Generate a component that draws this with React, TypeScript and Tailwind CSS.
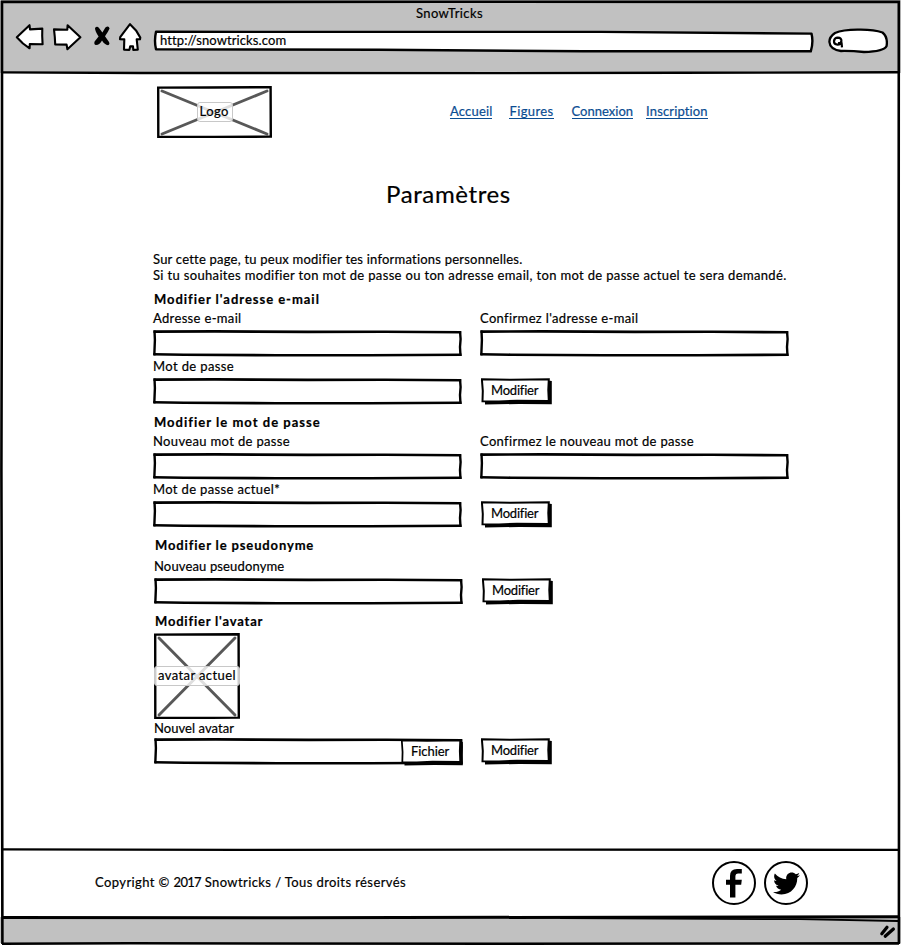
import type { ReactNode } from 'react';
import { FaTwitter } from 'react-icons/fa';

/* Hand-drawn outline of a text field, stretched to its box. */
function FieldOutline({ width }: { width: number }) {
  return (
    <svg className="pointer-events-none absolute inset-0" width={width} height="27" viewBox={`0 0 ${width} 27`} fill="none" stroke="#000" aria-hidden="true">
      <path d={`M0.5 1.6 L${width * 0.2} 1.4 L${width * 0.5} 1.9 L${width * 0.75} 1.7 L${width - 0.8} 2.3`} strokeWidth="2.6" />
      <path d={`M0.4 24.3 L${width * 0.1} 24.7 L${width * 0.4} 25.3 L${width * 0.7} 25.2 L${width - 0.5} 24.8`} strokeWidth="2.6" />
      <path d="M1.5 0.5 L1.9 10 L1.3 25.4" strokeWidth="2.4" />
      <path d={`M${width - 2} 1 L${width - 1.4} 9 L${width - 2} 17 L${width - 1.5} 26`} strokeWidth="2.4" />
    </svg>
  );
}

function Field({ label }: { label: string }) {
  return (
    <div className="relative h-[27px] w-[309px]">
      <input aria-label={label} className="size-full bg-transparent px-2 outline-none" />
      <FieldOutline width={309} />
    </div>
  );
}

function SketchButton({ children, className = 'w-[71px]', text }: { children: ReactNode; className?: string; text: string }) {
  return (
    <button className={`relative isolate flex h-[27px] items-start ${className}`}>
      <svg className="absolute inset-0 -z-10 size-full" viewBox="0 0 71 27" preserveAspectRatio="none" aria-hidden="true">
        <path d="M4 5 L69 2.8 L70.8 3 L70.8 26.2 L38 26 L4 26.4 Z" />
        <path d="M0.9 1.3 L30 1.7 L67.8 1.2 L67.3 12 L67.8 23 L36 22.8 L18 23.4 L1.5 23.3 L1.8 13 Z" fill="#fff" stroke="#000" strokeWidth="2" />
      </svg>
      <span className={`block leading-4 ${text}`}>{children}</span>
    </button>
  );
}

const modifierText = 'pl-[10px] pt-[4px] tracking-[-0.2px]';

function CrossedBox({ width, height, children }: { width: number; height: number; children: ReactNode }) {
  return (
    <div className="relative isolate flex size-full items-center justify-center">
      <svg className="absolute inset-0 -z-10" width={width} height={height} viewBox={`0 0 ${width} ${height}`} fill="none" aria-hidden="true">
        <path d={`M5 5 L${width - 5} ${height - 4} M${width - 5} 5 L5 ${height - 4}`} stroke="#585858" strokeWidth="2.9" strokeLinecap="round" />
        <path d={`M1.2 1.6 L${width * 0.45} 1.5 L${width - 1.4} 1.2 L${width - 1.2} ${height - 1.4} L${width / 2} ${height - 1.1} L1.3 ${height - 1} Z`} stroke="#000" strokeWidth="2.4" />
      </svg>
      {children}
    </div>
  );
}

function Icon({ d, label }: { d: string; label: string }) {
  return (
    <svg width="30" height="30" viewBox="0 0 30 30" fill="#fff" stroke="#000" strokeWidth="2.1" strokeLinejoin="round" strokeLinecap="round" role="img" aria-label={label}>
      <path d={d} />
    </svg>
  );
}

function BrowserBar() {
  return (
    <header className="h-[73px] bg-[#c1c1c1]">
      <div className="flex h-7 items-start justify-center pt-[5px] pr-[2px]">
        <span className="leading-4 tracking-[0.39px]">SnowTricks</span>
      </div>
      <div className="flex h-[36px] items-start pl-[15px]">
        <div className="-mt-[6px] flex">
          <div className="w-[37px]"><Icon label="Précédent" d="M1.8 15.2 L14.5 3.2 L15 7.4 L27.3 6.6 L27.2 14 L27.6 22.2 L14.8 22 L14.6 26.3 L8 21.5 Z" /></div>
          <div className="w-[40px]"><Icon label="Suivant" d="M2 7.4 L15.3 7.8 L15.6 3.2 L28.4 15.2 L15.4 27.2 L14.6 22.6 L3.2 22.4 L2.8 15 Z" /></div>
          <div className="w-[26px]">
            <svg width="26" height="30" viewBox="0 0 26 30" role="img" aria-label="Arrêter">
              <path d="M3 6 Q5 3.6 7 6 L10.4 10.4 L13.4 5.6 Q16.6 3 17.6 6.5 Q15.8 10.5 13 14.3 L17 20 Q18.2 22.6 16 23.3 Q12.6 22.6 10 18.4 Q8 22.5 4 23 Q1.6 22.4 2.6 19.4 L6.6 14.4 Q3 9.4 3 6 Z" />
            </svg>
          </div>
          <div className="w-[35px]"><Icon label="Accueil" d="M12 2.2 L18 8.4 L22.3 15.6 L22 17.3 L18.7 17.4 L19.8 27.6 L15.3 27.9 L15 24.4 L12.2 24.2 L11.4 27.9 L6 27.6 L6.3 17.4 L2 17.2 L2.2 15.2 Z" /></div>
        </div>
        <div className="relative isolate mt-[1px] h-[24px] w-[662px]">
          <svg className="absolute inset-0 -z-10" width="662" height="24" viewBox="0 0 662 24" fill="#fff" stroke="#000" strokeWidth="2.4" strokeLinejoin="round" aria-hidden="true">
            <path d="M3 2.8 L210 2.9 L448 2.9 L658.5 4.6 Q660.6 13 657.8 22.3 L430 22.3 L226 20.8 L3 20.3 Q1 12 3 2.8 Z" />
          </svg>
          <span className="block pt-[3px] pl-[7px] leading-4 tracking-[0.11px]">http://snowtricks.com</span>
        </div>
        <svg className="ml-[13px]" width="60" height="26" viewBox="0 0 60 26" fill="none" stroke="#000" strokeWidth="2.3" role="img" aria-label="Rechercher">
          <path fill="#fff" d="M7 5 Q15 1.4 31 1.6 Q46 1.4 54.5 4.5 Q60 9 58.6 18 Q56 23.6 36 24 Q24 22.8 13 23 Q2 21.5 1.4 14 Q1.2 9 7 5 Z" />
          <path strokeWidth="2.2" d="M9.8 9.7 Q13.6 9.8 13.4 13 Q12.8 16.6 9.6 16.6 Q5.8 16.3 6 13 Q6.4 9.8 9.8 9.7 Z M10 15.2 L13.6 15.4 L14 19.4" />
        </svg>
      </div>
    </header>
  );
}

function WindowFrame() {
  return (
    <svg className="pointer-events-none absolute inset-0" width="901" height="946" viewBox="0 0 901 946" fill="none" stroke="#000" strokeWidth="2.6" aria-hidden="true">
      <path d="M1 1.9 L450 1.8 L900 1.9" />
      <path d="M2 1 L2 200 L1.4 470 L2 700 L2.4 944" />
      <path d="M898.8 1 L898.7 220 L898.7 500 L899 780 L898.9 944" />
      <path d="M2 72.4 L140 73 L500 73.1 L680 72.8 L899 72.3" strokeWidth="2.4" />
      <path d="M2 849.3 L240 849.8 L560 849.7 L899 849.8" strokeWidth="2.3" />
      <path d="M2 917.5 L290 917.7 L899 916.8" strokeWidth="3" />
      <path d="M560 918.2 L800 919.2 L898 921" strokeWidth="1.8" />
      <path d="M2 943.8 L130 943.3 L500 943.8 L899 943.4" strokeWidth="2.6" />
    </svg>
  );
}

const linkClass = 'border-b border-[#0b4d92] text-[#0b4d92] leading-[13px] [-webkit-text-stroke:0.2px_#0b4d92]';

export default function App() {
  return (
    <div className="relative isolate flex h-[946px] w-[901px] flex-col bg-white font-['Lato',sans-serif] text-[13px] text-black [-webkit-text-stroke:0.2px]">
      <BrowserBar />

      <div className="flex h-[103px] items-start pt-[13px] pl-[157px]">
        <div className="h-[52px] w-[115px]">
          <CrossedBox width={115} height={52}>
            <span className="h-[20px] w-[36px] rounded-[3px] border border-[#c8c8c8] bg-white/80 pl-[2px] leading-[17px] tracking-[0.45px]">Logo</span>
          </CrossedBox>
        </div>
        <nav className="flex items-start pt-[19px] pl-[178px]">
          <a href="#" className={`mr-[17px] tracking-[0.18px] ${linkClass}`}>Accueil</a>
          <a href="#" className={`mr-[18px] tracking-[0.37px] ${linkClass}`}>Figures</a>
          <a href="#" className={`mr-[13px] tracking-[0.01px] ${linkClass}`}>Connexion</a>
          <a href="#" className={`tracking-[0.15px] ${linkClass}`}>Inscription</a>
        </nav>
      </div>

      <h1 className="h-[75px] pt-[2px] pl-[386px] text-2xl leading-8 tracking-[0.62px]">Paramètres</h1>

      <main className="flex h-[598px] flex-col pl-[153px] whitespace-nowrap leading-4">
        <p className="tracking-[0.22px]">Sur cette page, tu peux modifier tes informations personnelles.</p>
        <p className="tracking-[0.34px]">Si tu souhaites modifier ton mot de passe ou ton adresse email, ton mot de passe actuel te sera demandé.</p>

        <h2 className="mt-2 pl-px font-bold tracking-[0.97px]">Modifier l'adresse e-mail</h2>
        <div className="mt-[3px] grid grid-cols-[327px_309px]">
          <span className="h-5 tracking-[0.34px]">Adresse e-mail</span>
          <span className="h-5 tracking-[0.35px]">Confirmez l'adresse e-mail</span>
          <Field label="Adresse e-mail" />
          <Field label="Confirmez l'adresse e-mail" />
        </div>
        <span className="mt-px h-5 tracking-[0.38px]">Mot de passe</span>
        <div className="grid grid-cols-[328px_71px]">
          <Field label="Mot de passe" />
          <SketchButton text={modifierText}>Modifier</SketchButton>
        </div>

        <h2 className="mt-[9px] pl-px font-bold tracking-[1.02px]">Modifier le mot de passe</h2>
        <div className="mt-[3px] grid grid-cols-[327px_309px]">
          <span className="h-5 tracking-[0.35px]">Nouveau mot de passe</span>
          <span className="h-5 tracking-[0.33px]">Confirmez le nouveau mot de passe</span>
          <Field label="Nouveau mot de passe" />
          <Field label="Confirmez le nouveau mot de passe" />
        </div>
        <span className="mt-px h-5 tracking-[0.36px]">Mot de passe actuel*</span>
        <div className="grid grid-cols-[328px_71px]">
          <Field label="Mot de passe actuel" />
          <SketchButton text={modifierText}>Modifier</SketchButton>
        </div>

        <h2 className="mt-[9px] pl-[2px] font-bold tracking-[0.86px]">Modifier le pseudonyme</h2>
        <span className="mt-[5px] h-5 pl-px tracking-[0.14px]">Nouveau pseudonyme</span>
        <div className="grid grid-cols-[328px_71px] pl-px">
          <Field label="Nouveau pseudonyme" />
          <SketchButton text={modifierText}>Modifier</SketchButton>
        </div>

        <h2 className="mt-[8px] pl-[2px] font-bold tracking-[0.8px]">Modifier l'avatar</h2>
        <div className="mt-1 ml-px h-[86px] w-[86px]">
          <CrossedBox width={86} height={86}>
            <span className="h-[20px] w-[86px] shrink-0 rounded-[3px] border border-[#c8c8c8] bg-white/80 pl-[3px] leading-[17px] tracking-[0.4px]">avatar actuel</span>
          </CrossedBox>
        </div>
        <span className="mt-px h-[18px] pl-px tracking-[0.06px]">Nouvel avatar</span>
        <div className="flex">
          <div className="relative ml-px flex h-[27px] w-[309px]">
            <FieldOutline width={309} />
            <span className="w-[247px]" />
            <SketchButton className="mt-[1px] w-[62px]" text="pl-[10px] pt-[4px] tracking-[-0.05px]">Fichier</SketchButton>
          </div>
          <div className="ml-[18px]">
            <SketchButton text={modifierText}>Modifier</SketchButton>
          </div>
        </div>
      </main>

      <footer className="flex h-[68px] items-center pl-[95px]">
        <span className="w-[617px] tracking-[0.41px]">
          Copyright © <span className="tracking-[-0.7px]">2017</span> Snowtricks / Tous droits réservés
        </span>
        <a href="#" aria-label="Facebook" className="flex size-[44px] items-center justify-center rounded-full border-2 border-black">
          <svg width="18" height="30" viewBox="0 0 18 30" aria-hidden="true">
            <path d="M5 29.5 V16.8 H1 V11.8 H5 V8 Q5 1 12 1 H16.8 V5.6 H13.2 Q10.4 5.6 10.4 8.6 V11.8 H16.8 L16.2 16.8 H10.4 V29.5 Z" />
          </svg>
        </a>
        <a href="#" aria-label="Twitter" className="ml-2 flex size-[44px] items-center justify-center rounded-full border-2 border-black">
          <FaTwitter size={27} />
        </a>
      </footer>

      <div className="flex h-[26px] items-center justify-end bg-[#c1c1c1] pr-1">
        <svg width="18" height="18" viewBox="0 0 18 18" stroke="#000" strokeWidth="3.2" strokeLinecap="round" aria-hidden="true">
          <path d="M2.8 12.8 L8 6.2 M6.2 15.3 L14.4 8" />
        </svg>
      </div>
      <WindowFrame />
    </div>
  );
}
